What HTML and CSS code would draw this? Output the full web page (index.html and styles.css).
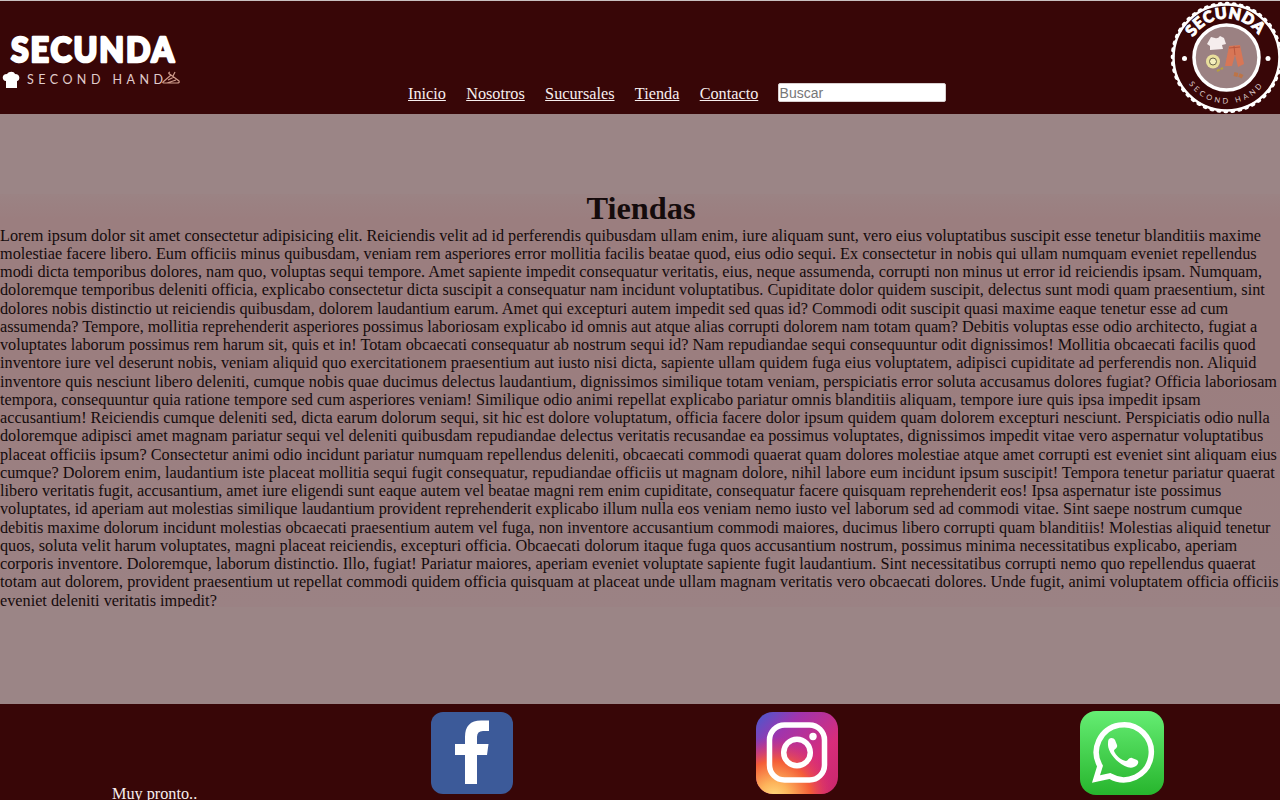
FILE: index.html
```html
<!DOCTYPE html>
<html lang="es">
<head>
<meta charset="utf-8">
<title>Secunda - Tiendas</title>
<link rel="stylesheet" href="styles.css">
</head>
<body>
<header class="header">
  <svg class="wordmark" viewBox="0 0 190 113" role="img" aria-label="Secunda Second Hand">
    <text class="wordmark-name" x="11" y="61" textLength="165" lengthAdjust="spacingAndGlyphs">SECUNDA</text>
    <text class="wordmark-sub" x="27" y="83" textLength="136" lengthAdjust="spacing">SECOND HAND</text>
    <path fill="#fff" d="M6 87V80C2 80 1 73 7 73C9 70 14 70 15 73C21 73 20 80 17 80V87Z"/>
    <path class="hanger" d="M163 81L171 74L179 80Q180 82 177 82H165Q162 82 163 81M168 79L174 76M167 82L176 79M171 74Q167 72 170 71M173 75L175 71"/>
  </svg>
  <nav class="nav">
    <a href="#">Inicio</a>
    <a href="#">Nosotros</a>
    <a href="#">Sucursales</a>
    <a href="#">Tienda</a>
    <a href="#">Contacto</a>
    <input class="search" type="text" placeholder="Buscar">
  </nav>
  <svg class="seal" viewBox="1160 1 120 113" role="img" aria-label="Sello Secunda">
    <defs>
      <path id="arc-top" d="M1187.500 57.500A39 39 0 0 1 1265.500 57.500"/>
      <path id="arc-bottom" d="M1180.500 57.500A46 46 0 0 0 1272.500 57.500"/>
    </defs>
    <circle cx="1226.500" cy="57.500" r="53" fill="#380607" stroke="#fff" stroke-width="2.500"/>
    <circle class="seal-teeth" cx="1226.500" cy="57.500" r="54" pathLength="240"/>
    <circle cx="1226.500" cy="57.500" r="32.500" fill="#9b8182" stroke="#fff" stroke-width="3.500"/>
    <circle cx="1184.500" cy="58.500" r="2.500" fill="#fff"/>
    <circle cx="1268" cy="58.500" r="2.500" fill="#fff"/>
    <text class="seal-name"><textPath href="#arc-top" startOffset="49%">SECUNDA</textPath></text>
    <text class="seal-sub"><textPath href="#arc-bottom" startOffset="50%">SECOND HAND</textPath></text>
    <path fill="#f5eded" d="M1211 37L1215 38Q1218 39 1220 36L1224 38L1226 44L1222 45L1223 49L1210 50L1210 46L1207 44Z"/>
    <path fill="#d87656" d="M1229 46L1240 45L1244 64L1238 67L1235 55L1232 66L1225 66Z"/>
    <path stroke="#b9573e" fill="none" d="M1229 48L1240 47M1234 46L1235 55"/>
    <circle cx="1213" cy="61.500" r="7" fill="#e9df9c"/>
    <circle cx="1213" cy="61.500" r="3.500" fill="#f4efbd" stroke="#69634c"/>
    <path stroke="#b6a03d" stroke-width="2" stroke-dasharray="3 1" fill="none" d="M1217 71L1223 68"/>
    <path stroke="#bd7447" stroke-width="4" stroke-dasharray="4 1" fill="none" d="M1234 74L1238 75M1239 75L1243 77"/>
  </svg>
</header>
<main class="main">
  <section class="stores">
    <h1 class="title">Tiendas</h1>
    <p class="copy">Lorem ipsum dolor sit amet consectetur adipisicing elit. Reiciendis velit ad id perferendis quibusdam ullam enim, iure aliquam sunt, vero eius voluptatibus suscipit esse tenetur blanditiis maxime<br>
molestiae facere libero. Eum officiis minus quibusdam, veniam rem asperiores error mollitia facilis beatae quod, eius odio sequi. Ex consectetur in nobis qui ullam numquam eveniet repellendus<br>
modi dicta temporibus dolores, nam quo, voluptas sequi tempore. Amet sapiente impedit consequatur veritatis, eius, neque assumenda, corrupti non minus ut error id reiciendis ipsam. Numquam,<br>
doloremque temporibus deleniti officia, explicabo consectetur dicta suscipit a consequatur nam incidunt voluptatibus. Cupiditate dolor quidem suscipit, delectus sunt modi quam praesentium, sint<br>
dolores nobis distinctio ut reiciendis quibusdam, dolorem laudantium earum. Amet qui excepturi autem impedit sed quas id? Commodi odit suscipit quasi maxime eaque tenetur esse ad cum<br>
assumenda? Tempore, mollitia reprehenderit asperiores possimus laboriosam explicabo id omnis aut atque alias corrupti dolorem nam totam quam? Debitis voluptas esse odio architecto, fugiat a<br>
voluptates laborum possimus rem harum sit, quis et in! Totam obcaecati consequatur ab nostrum sequi id? Nam repudiandae sequi consequuntur odit dignissimos! Mollitia obcaecati facilis quod<br>
inventore iure vel deserunt nobis, veniam aliquid quo exercitationem praesentium aut iusto nisi dicta, sapiente ullam quidem fuga eius voluptatem, adipisci cupiditate ad perferendis non. Aliquid<br>
inventore quis nesciunt libero deleniti, cumque nobis quae ducimus delectus laudantium, dignissimos similique totam veniam, perspiciatis error soluta accusamus dolores fugiat? Officia laboriosam<br>
tempora, consequuntur quia ratione tempore sed cum asperiores veniam! Similique odio animi repellat explicabo pariatur omnis blanditiis aliquam, tempore iure quis ipsa impedit ipsam<br>
accusantium! Reiciendis cumque deleniti sed, dicta earum dolorum sequi, sit hic est dolore voluptatum, officia facere dolor ipsum quidem quam dolorem excepturi nesciunt. Perspiciatis odio nulla<br>
doloremque adipisci amet magnam pariatur sequi vel deleniti quibusdam repudiandae delectus veritatis recusandae ea possimus voluptates, dignissimos impedit vitae vero aspernatur voluptatibus<br>
placeat officiis ipsum? Consectetur animi odio incidunt pariatur numquam repellendus deleniti, obcaecati commodi quaerat quam dolores molestiae atque amet corrupti est eveniet sint aliquam eius<br>
cumque? Dolorem enim, laudantium iste placeat mollitia sequi fugit consequatur, repudiandae officiis ut magnam dolore, nihil labore eum incidunt ipsum suscipit! Tempora tenetur pariatur quaerat<br>
libero veritatis fugit, accusantium, amet iure eligendi sunt eaque autem vel beatae magni rem enim cupiditate, consequatur facere quisquam reprehenderit eos! Ipsa aspernatur iste possimus<br>
voluptates, id aperiam aut molestias similique laudantium provident reprehenderit explicabo illum nulla eos veniam nemo iusto vel laborum sed ad commodi vitae. Sint saepe nostrum cumque<br>
debitis maxime dolorum incidunt molestias obcaecati praesentium autem vel fuga, non inventore accusantium commodi maiores, ducimus libero corrupti quam blanditiis! Molestias aliquid tenetur<br>
quos, soluta velit harum voluptates, magni placeat reiciendis, excepturi officia. Obcaecati dolorum itaque fuga quos accusantium nostrum, possimus minima necessitatibus explicabo, aperiam<br>
corporis inventore. Doloremque, laborum distinctio. Illo, fugiat! Pariatur maiores, aperiam eveniet voluptate sapiente fugit laudantium. Sint necessitatibus corrupti nemo quo repellendus quaerat<br>
totam aut dolorem, provident praesentium ut repellat commodi quidem officia quisquam at placeat unde ullam magnam veritatis vero obcaecati dolores. Unde fugit, animi voluptatem officia officiis<br>
eveniet deleniti veritatis impedit?</p>
  </section>
</main>
<footer class="footer">
  <p class="soon">Muy pronto..</p>
  <svg class="social" viewBox="0 0 84 84" role="img" aria-label="Facebook">
    <rect x="1" y="1" width="82" height="82" rx="12" fill="#3c5a99"/>
    <path fill="#fff" d="M35 73V44H25V33H35V26Q35 9 52 9.500H59V20H53Q47 20 47 26V33H58.500L57 44H47V73Z"/>
  </svg>
  <svg class="social" viewBox="0 0 84 84" role="img" aria-label="Instagram">
    <defs>
      <linearGradient id="ig-base" x1="0" y1="0" x2="1" y2="1">
        <stop offset="0" stop-color="#435bd0"/><stop offset=".28" stop-color="#a134ac"/><stop offset=".65" stop-color="#d72d7b"/><stop offset="1" stop-color="#c9276b"/>
      </linearGradient>
      <radialGradient id="ig-warm" cx=".22" cy="1.05" r=".75">
        <stop offset="0" stop-color="#ffdc80"/><stop offset=".25" stop-color="#fdb45b"/><stop offset=".6" stop-color="#f45e38"/><stop offset="1" stop-color="#df2c72" stop-opacity="0"/>
      </radialGradient>
    </defs>
    <rect x="1" y="1" width="82" height="82" rx="17" fill="url(#ig-base)"/>
    <rect x="1" y="1" width="82" height="82" rx="17" fill="url(#ig-warm)"/>
    <rect x="14.500" y="14" width="55" height="55" rx="15" fill="none" stroke="#fff" stroke-width="5.500"/>
    <circle cx="42" cy="41.500" r="13.300" fill="none" stroke="#fff" stroke-width="5.500"/>
    <circle cx="58" cy="25.500" r="3.700" fill="#fff"/>
  </svg>
  <svg class="social" viewBox="0 0 84 84" role="img" aria-label="WhatsApp">
    <defs><linearGradient id="wa" x1="0" y1="0" x2="0" y2="1"><stop offset="0" stop-color="#65ed73"/><stop offset="1" stop-color="#27b52d"/></linearGradient></defs>
    <rect width="84" height="84" rx="16" fill="url(#wa)"/>
    <path fill="none" stroke="#fff" stroke-width="5.500" d="M16 68L20 55A27.500 27.500 0 1 1 30 65Z"/>
    <path fill="#fff" d="M29 28C31 26 34 27 35 29L37 34C38 37 34 38 34 40C36 45 41 49 46 50C48 50 49 46 52 47L57 49C60 51 57 55 54 56C45 60 28 44 28 34C28 31 28 29 29 28Z"/>
  </svg>
</footer>
</body>
</html>
```
FILE: styles.css
```css
* { box-sizing: border-box; }
body {
  margin: 0;
  height: 800px;
  overflow: hidden;
  display: flex;
  flex-direction: column;
  border-top: 1px solid #c9c0c0;
  background: #9b8586;
  color: #150b0c;
  font-family: "Liberation Serif", "Times New Roman", serif;
  font-size: 16.24px;
}
.header {
  flex: none;
  height: 113px;
  display: flex;
  background: #380607;
}
.wordmark { width: 190px; height: 113px; }
.wordmark-name { font: 900 35px Lato, sans-serif; letter-spacing: 2px; fill: #fff; stroke: #fff; stroke-width: 2.5px; stroke-linejoin: round; }
.wordmark-sub { font: 400 12.5px Lato, sans-serif; fill: #e0cccc; }
.hanger { fill: none; stroke: #cf9b8c; stroke-width: 1.2; }
.nav {
  flex: 1;
  display: flex;
  align-items: flex-end;
  gap: 20.3px;
  padding: 0 0 10px 218px;
}
.nav a { color: #f7eeee; line-height: 19px; }
.search {
  width: 168px;
  height: 19px;
  margin: 0 0 2px -1px;
  padding: 1px;
  border: 1px solid #d8cfcf;
  border-radius: 2px;
  background: #fff;
  font: 14px "Liberation Sans", Arial, sans-serif;
}
.search::placeholder { color: #777; }
.seal { width: 120px; height: 113px; }
.seal-teeth { fill: none; stroke: #fff; stroke-width: 3.5; stroke-linecap: round; stroke-dasharray: 1 4; }
.seal-name { font: 900 15.5px Lato, sans-serif; letter-spacing: .6px; fill: #fff; stroke: #fff; stroke-width: 1px; text-anchor: middle; }
.seal-sub { font: 400 7.5px Lato, sans-serif; letter-spacing: 3px; fill: #dccccc; text-anchor: middle; }
.main {
  flex: none;
  height: 590px;
  padding-top: 80px;
}
.stores {
  height: 413px;
  overflow: hidden;
  background: linear-gradient(#9b8384, #9b7e7f 25px, #9b7e7f 180px, #9b8284);
}
.title {
  margin: 0;
  padding: 0 0 3.6px 2px;
  font-size: 32.4px;
  line-height: 29px;
  text-align: center;
}
.copy {
  margin: 0;
  line-height: 18.25px;
  white-space: nowrap;
}
.footer {
  flex: none;
  height: 130px;
  display: grid;
  grid-template-columns: 430px 325px 325px 1fr;
  align-items: start;
  padding-top: 7px;
  background: #380607;
}
.soon {
  margin: 0;
  padding: 74px 0 0 112px;
  color: #f7eeee;
  line-height: 19px;
}
.social { width: 84px; height: 84px; }
```
